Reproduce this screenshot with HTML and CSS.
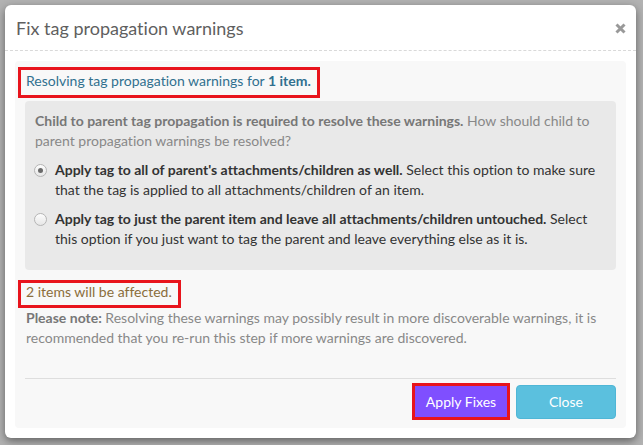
FILE: index.html
```html
<!DOCTYPE html>
<html>
<head>
<meta charset="utf-8">
<link rel="stylesheet" href="styles.css">
</head>
<body>
<div class="backdrop">
  <div class="modal">
    <div class="modal-header">
      <h4 class="modal-title">Fix tag propagation warnings</h4>
      <svg class="close-x" width="11" height="11" viewBox="0 0 11 11"><path d="M1.5 1.5 L9.5 9.5 M9.5 1.5 L1.5 9.5" stroke="#999" stroke-width="3" stroke-linecap="butt"/></svg>
    </div>
    <div class="modal-body">
      <div class="panel">
        <div class="mark mark-info"><span class="info-text">Resolving tag propagation warnings for <b>1 item.</b></span></div>
        <div class="choices">
          <p class="question"><b>Child to parent tag propagation is required to resolve these warnings.</b> How should child to parent propagation warnings be resolved?</p>
          <label class="option">
            <input type="radio" name="mode" class="radio" checked>
            <span class="option-text"><b>Apply tag to all of parent's attachments/children as well.</b> Select this option to make sure that the tag is applied to all attachments/children of an item.</span>
          </label>
          <label class="option">
            <input type="radio" name="mode" class="radio">
            <span class="option-text"><b>Apply tag to just the parent item and leave all attachments/children untouched.</b> Select this option if you just want to tag the parent and leave everything else as it is.</span>
          </label>
        </div>
        <div class="mark mark-warn"><span class="warn-text">2 items will be affected.</span></div>
        <p class="note"><b>Please note:</b> Resolving these warnings may possibly result in more discoverable warnings, it is recommended that you re-run this step if more warnings are discovered.</p>
        <div class="footer">
          <button class="btn btn-apply">Apply Fixes</button>
          <button class="btn btn-close">Close</button>
        </div>
      </div>
    </div>
  </div>
</div>
</body>
</html>
```

FILE: styles.css
```css
html, body {
  margin: 0;
  padding: 0;
}
body {
  background: #b2b2b2;
  font-family: Lato, "Open Sans", sans-serif;
  font-variant-ligatures: none;
  width: 643px;
  height: 445px;
  overflow: hidden;
}
.backdrop {
  padding: 5px 0 0 5px;
}
.modal {
  width: 631px;
  height: 433px;
  box-sizing: border-box;
  background: #fff;
  border-radius: 6px;
  box-shadow: 0 3px 8px rgba(0, 0, 0, 0.45);
  display: flex;
  flex-direction: column;
}
.modal-header {
  height: 46px;
  flex: none;
  box-sizing: border-box;
  border-bottom: 1px dashed #d9d9d9;
  padding: 0 10px 0 11px;
  display: flex;
  align-items: center;
  justify-content: space-between;
}
.modal-title {
  margin: 0;
  font-size: 18px;
  font-weight: normal;
  color: #5f5f5f;
  line-height: 24px;
}
.close-x {
  display: block;
  margin-top: 1px;
}
.modal-body {
  flex: 1;
  padding: 10px;
  display: flex;
}
.panel {
  flex: 1;
  background: #f8f8f8;
  border-radius: 4px;
  padding: 6px 10px 8px 10px;
  display: flex;
  flex-direction: column;
  font-size: 14px;
  line-height: 20px;
}
.panel > * {
  flex-shrink: 0;
}
.mark {
  align-self: flex-start;
  margin-left: -7px;
  border: 3px solid #e8141c;
  padding: 0 6px 0 5px;
}
.mark-info {
  line-height: 22px;
  padding-bottom: 3px;
}
.info-text {
  color: #31708f;
}
.choices {
  margin-top: 3px;
  background: #e9e9e9;
  border-radius: 4px;
  padding: 10px 10px 21px 10px;
}
.question {
  margin: 0;
  color: #888;
}
.question b {
  color: #777;
}
.option {
  display: flex;
  align-items: flex-start;
  margin-top: 9px;
  color: #333;
}
.radio {
  appearance: none;
  -webkit-appearance: none;
  width: 13px;
  height: 13px;
  margin: 4px 8px 0 -1px;
  flex: none;
  border-radius: 50%;
  border: 1px solid #b5b5b5;
  box-sizing: border-box;
  background: linear-gradient(#fdfdfd, #e6e6e6);
  position: relative;
}
.radio:checked::after {
  content: "";
  position: absolute;
  left: 3px;
  top: 3px;
  width: 5px;
  height: 5px;
  border-radius: 50%;
  background: #6a6a6a;
}
.mark-warn {
  margin-top: 10px;
  line-height: 17px;
  padding-bottom: 5px;
}
.warn-text {
  color: #8a6d3b;
}
.note {
  margin: 0 0 30px 1px;
  color: #888;
}
.note b {
  color: #777;
}
.footer {
  border-top: 1px solid #dedede;
  padding-top: 4px;
  display: flex;
  justify-content: flex-end;
  align-items: center;
  gap: 6px;
}
.btn {
  font-family: Lato, "Open Sans", sans-serif;
  font-size: 14px;
  color: #fff;
  border-radius: 4px;
  cursor: pointer;
  box-sizing: border-box;
}
.btn-apply {
  width: 98px;
  height: 37px;
  background: #7f4fff;
  border: 3px solid #e8141c;
  border-radius: 0;
  padding: 0;
}
.btn-close {
  width: 100px;
  height: 34px;
  background: #5bc0de;
  border: 1px solid #4fb6d6;
  padding: 0;
}
```
